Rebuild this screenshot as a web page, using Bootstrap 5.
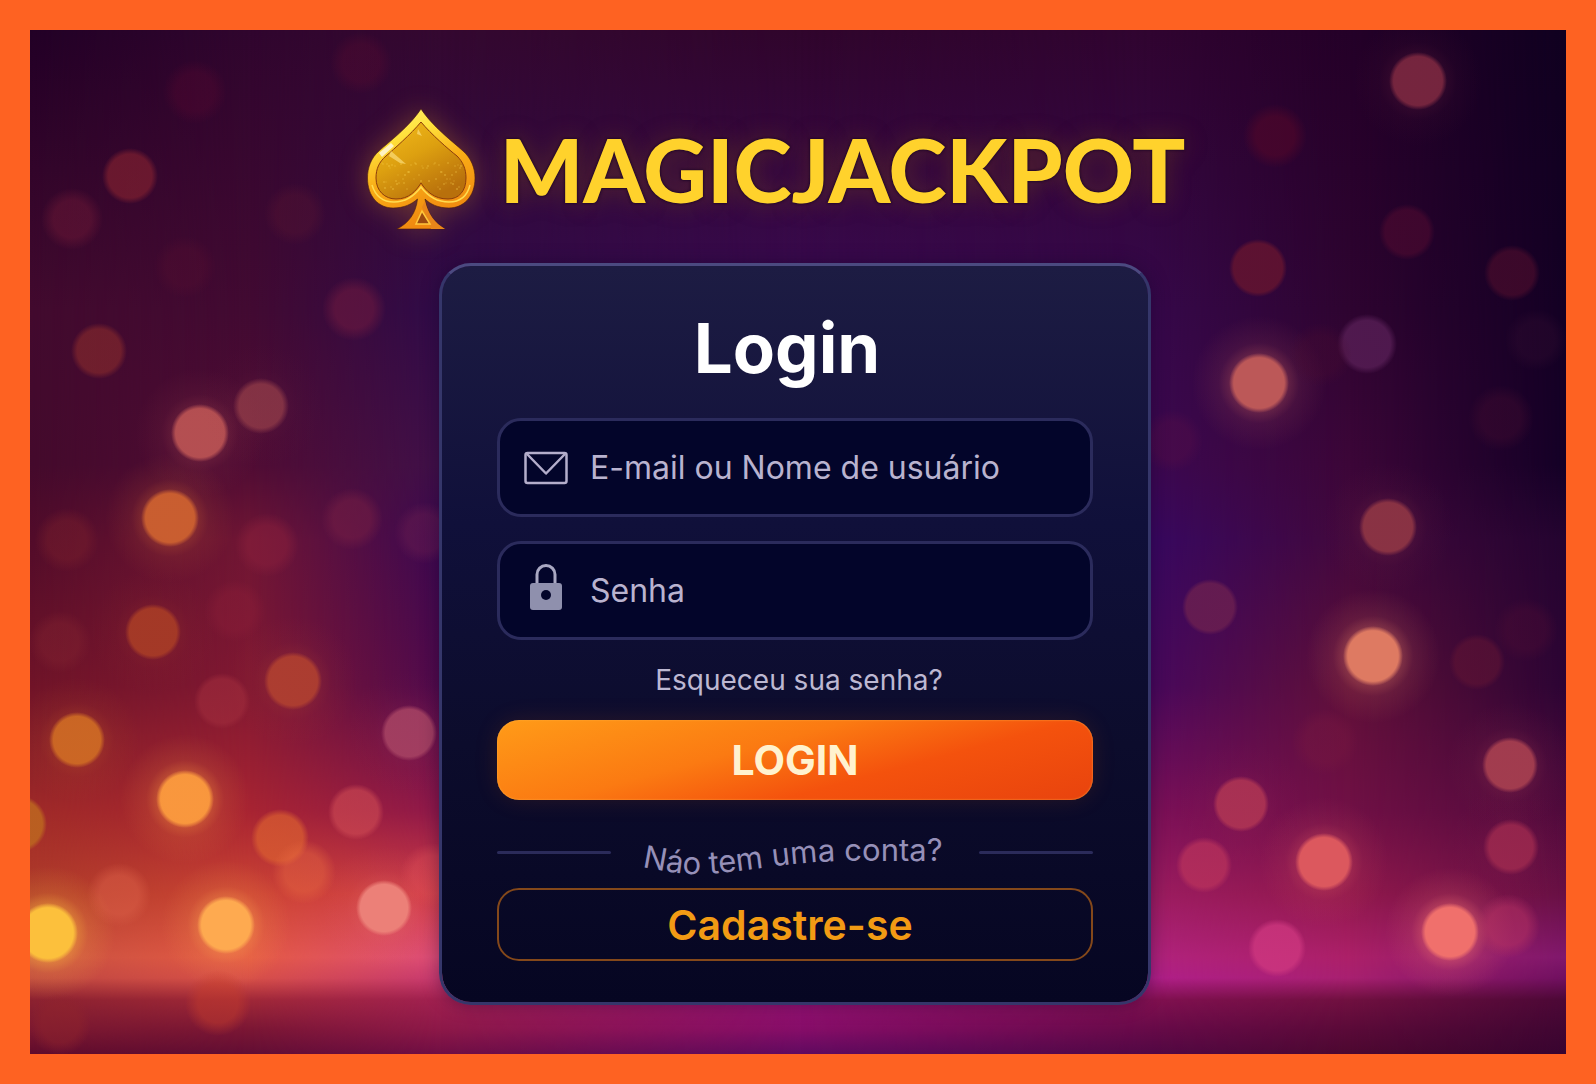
<!DOCTYPE html>
<html lang="pt-BR">
<head>
<meta charset="utf-8">
<meta name="viewport" content="width=device-width, initial-scale=1">
<title>MagicJackpot - Login</title>
<link href="https://cdn.jsdelivr.net/npm/bootstrap@5.3.0/dist/css/bootstrap.min.css" rel="stylesheet">
<style>
  body { background: #fe6222; font-family: Inter, "Liberation Sans", sans-serif; }
  .frame { min-height: 100vh; padding: 30px; }
  .stage { background: #340830; padding: 77px 6px 49px 0; }
  .backdrop { inset: 0; width: 100%; height: 100%; }
  .brand { gap: 19px; padding-right: 44px; margin-bottom: 32px; }
  .brand-icon { width: 120px; height: 124px; filter: drop-shadow(0 0 14px rgba(255,170,20,.3)); }
  .brand-name { font-family: Lato, sans-serif; font-weight: 900; font-size: 88px; line-height: 120px; color: #ffd22c;
    text-shadow: 0 0 2px #1c0626, 0 0 3px #1c0626, 0 0 24px rgba(150,100,10,.35); }
  .panel { max-width: 712px; padding: 40px 55px 41px; border: 3px solid #35366a; border-top-color: #4b4a80; border-radius: 32px;
    background: linear-gradient(#1d1c43, #10103a 35%, #0c0c2c 65%, #060622) padding-box; box-shadow: 0 0 18px rgba(20,0,40,.4); }
  .panel-title { font-size: 69px; line-height: 84px; font-weight: 700; color: #fff; padding-right: 16px; margin-bottom: 28px; }
  .field { height: 99px; padding: 0 24px; gap: 22px; border: 3px solid #2b2b5c; border-radius: 24px; background: #03052a; margin-bottom: 24px; }
  .field:focus-within { border-color: #6a6ab4; }
  .field svg { display: block; width: 44px; height: 50px; flex: none; overflow: visible; }
  .field .form-control, .field .form-control::placeholder { font-size: 32px; line-height: 44px; color: #b9b3cf; opacity: 1; }
  .field .form-control:focus { box-shadow: none; }
  .forgot { font-size: 28px; line-height: 32px; color: #bdb8d2; margin-bottom: 24px; }
  .btn-enter { height: 80px; border: 0; border-radius: 22px; font-size: 41px; line-height: 48px; font-weight: 700; color: #fff2cf;
    background: linear-gradient(165deg, #ff9b18, #fb7a12 40%, #f4520d 65%, #e8430e); box-shadow: inset 0 0 2px #ffb040, 0 0 24px rgba(255,110,0,.12); }
  .btn-enter:hover { color: #fff; }
  .separator { height: 88px; }
  .rule { width: 114px; height: 3px; border-radius: 2px; background: #2b2b5a; }
  .wave { width: 320px; height: 88px; font-size: 31px; fill: #9690b8; overflow: visible; }
  .btn-join { height: 73px; border: 2px solid #84481a; border-radius: 22px; font-size: 41px; line-height: 48px; font-weight: 600; color: #f29b14; padding: 0 10px 0 0; }
  .btn-join:hover { color: #ffb43c; border-color: #c06a20; }
</style>
<script src="https://cdn.jsdelivr.net/npm/bootstrap@5.3.0/dist/js/bootstrap.bundle.min.js"></script>
</head>
<body>
<div class="frame d-flex flex-column">
  <div class="stage position-relative flex-grow-1 overflow-hidden">
    <svg id="backdrop" class="backdrop position-absolute" viewBox="30 30 1536 1024" preserveAspectRatio="none" aria-hidden="true"></svg>

    <header class="brand position-relative d-flex justify-content-center align-items-center">
      <svg class="brand-icon" viewBox="360 106 120 124" aria-hidden="true">
        <defs>
          <linearGradient id="rim" x1="0" y1="0" x2=".35" y2="1">
            <stop offset="0" stop-color="#fff27a"/><stop offset=".3" stop-color="#ffe23c"/><stop offset=".6" stop-color="#f9ad16"/><stop offset="1" stop-color="#f08a10"/>
          </linearGradient>
          <linearGradient id="core" x1="0" y1="0" x2=".6" y2="1">
            <stop offset="0" stop-color="#f4bd1c"/><stop offset=".5" stop-color="#dda010"/><stop offset="1" stop-color="#b8700c"/>
          </linearGradient>
        </defs>
        <path fill="url(#rim)" stroke="#4a1c10" stroke-width=".6" d="M420 108C431 125 452 141 462 150C470 157 474 167 474 177C474 196 462 207 448 207C437 207 429 203 424 198C426 212 433 222 444 228H396C408 222 415 212 416.500 198C411 203 403 207 392 207C378 207 366.500 196 366.500 177C366.500 167 370 157 378 150C388 141 409 125 420 108Z"/>
        <path fill="none" stroke="#ffdc50" stroke-width="1.500" d="M371 184C375 197 383 201 393 201C406 201 414 194 420 186C426 194 434 201 448 201C458 201 466 196 469 184"/>
        <path fill="url(#core)" stroke="#8c3c0c" stroke-width="1" d="M420 121C410 133 393 148 385 155C378 161 375 168 375 177C375 190 384 198 395 198C408 198 415 190 420 182C425 190 433 198 447 198C458 198 465 190 465 177C465 168 462 161 456 155C447 148 430 133 420 121Z"/>
        <path fill="#fff" opacity=".7" d="M378 152L390 142L393 145L381 156Z"/>
        <path fill="#ffe68c" opacity=".6" d="M390 150L405 163L399 162L388 155ZM417 128L421 135L416 133Z"/>
        <path fill="#e8861a" d="M424 200C427 213 434 222 444 228H430L421 206Z"/>
        <path fill="#9c4a10" stroke="#ffc83c" stroke-width="1.500" d="M421 210L415 223H429Z"/>
        <g id="glitter" fill="#ffdc5a"></g>
      </svg>
      <div class="brand-name">MAGICJACKPOT</div>
    </header>

    <main class="panel position-relative mx-auto">
      <form onsubmit="return false">
        <h1 class="panel-title text-center">Login</h1>

        <div class="field d-flex align-items-center">
          <label for="user">
            <svg viewBox="0 0 44 50" fill="none" stroke="#b4aecb" stroke-width="2.500" stroke-linejoin="round" role="img" aria-label="E-mail ou Nome de usuário">
              <rect x="1.500" y="10" width="41" height="30" rx="2"/><path d="M3 11L22 30.500L41 11"/>
            </svg>
          </label>
          <input class="form-control bg-transparent border-0 p-0" id="user" type="text" placeholder="E-mail ou Nome de usuário">
        </div>

        <div class="field d-flex align-items-center">
          <label for="pass">
            <svg viewBox="0 4 44 50" role="img" aria-label="Senha">
              <path d="M13 21V12.500a9 9 0 0 1 18 0V21" fill="none" stroke="#a9a8c2" stroke-width="3"/>
              <rect x="6" y="21" width="32" height="27" rx="3" fill="#8f90ad"/><circle cx="22" cy="33" r="5" fill="#03052a"/>
            </svg>
          </label>
          <input class="form-control bg-transparent border-0 p-0" id="pass" type="password" placeholder="Senha">
        </div>

        <div class="d-flex justify-content-center ps-2"><a class="forgot text-decoration-none" href="#">Esqueceu sua senha?</a></div>
        <button class="btn btn-enter d-block w-100" type="submit">LOGIN</button>

        <div class="separator d-flex align-items-center justify-content-between">
          <span class="rule mt-3"></span>
          <svg class="wave" viewBox="635 800 320 88" role="img" aria-label="Náo tem uma conta?">
            <path id="wavePath" fill="none" d="M642 867C664 871 682 875 704 874C748 872 790 861 850 861H990"/>
            <text><textPath href="#wavePath">Náo tem uma conta?</textPath></text>
          </svg>
          <span class="rule mt-3"></span>
        </div>

        <button class="btn btn-join d-block w-100" type="button">Cadastre-se</button>
      </form>
    </main>
  </div>
</div>

<script>
  // Colour mesh: one vertical gradient per column, cross-faded between neighbours
  const rows = [30, 310, 465, 540, 686, 812, 894, 957, 978, 1000, 1030, 1054];
  const mesh = [
    [30,   '220026 420a2e 440a2c 520c2a 701428 a02a28 b03c2a c85040 c04840 8c2230 7a1830 600c2c'],
    [250,  '30052e 420a32 500c34 701634 801832 a82432 cc4434 e45a44 d85048 a02838 7a1634 620e34'],
    [440,  '340830 300b48 401048 3c0850 500a4c 90194a d03c48 dc4c78 c83a70 a02050 8c1848 700e44'],
    [800,  '30052c 3a0a52 3a0a52 3a0a52 3a0a52 3a0a52 900e70 a01478 a01478 981274 850d68 600a60'],
    [1150, '300430 36084a 3c0850 380860 48085c 7c1058 9c1c60 b0227c b01f88 801050 660a48 520844'],
    [1350, '240028 2e0430 3c0638 42083c 601038 701045 90184c ac2068 a82070 701040 5a0a38 4c0830'],
    [1566, '100020 140024 140026 240430 2c0434 500a3c 681044 80186c 701060 4c0836 400632 380430']
  ];
  // Light spots: x, y, radius, colour, opacity, halo opacity
  const spots = [
    [130,176,26,'8c2430',.6,0],[72,219,26,'7a1c38',.4,0],[99,351,26,'8c2c2c',.6,0],[354,309,27,'781c40',.5,0],[295,214,26,'6a1c30',.25,0],
    [195,92,27,'600830',.3,0],[361,63,26,'600c30',.3,0],[185,267,26,'601030',.25,0],[200,433,27,'bc5454',.9,.3],[261,406,26,'98404a',.7,.1],[170,518,27,'cc6030',.95,.45],
    [352,519,26,'7a2044',.5,0],[67,540,27,'80222c',.4,0],[425,533,26,'702050',.4,0],[267,545,27,'8c203c',.5,0],[153,632,26,'a83c26',.9,.2],
    [235,611,26,'8c1e38',.4,0],[293,681,27,'b04030',.9,.3],[222,701,26,'a02c3c',.6,0],[60,642,26,'842430',.4,0],[77,740,26,'d06c24',.9,.25],
    [409,733,26,'a84464',.85,.1],[185,799,27,'fb9a3e',.95,.5],[356,812,26,'d04c54',.6,0],[280,838,27,'dc6030',.7,0],[304,872,27,'e86840',.45,0],
    [18,824,27,'bc6420',.9,0],[119,895,27,'dc6048',.5,0],[48,933,28,'fcc03c',1,.6],[226,925,27,'feaa50',1,.5],[384,908,26,'ec8078',1,.2],
    [218,1003,28,'c43c2c',.5,0],[60,1024,26,'90242c',.5,0],[432,875,27,'e05058',.4,0],
    [1418,81,27,'7c2840',.9,.25],[1275,136,27,'5c0828',.5,0],[1407,232,26,'500a30',.6,0],[1258,268,27,'641430',.85,0],[1512,273,26,'4a0c2c',.7,0],
    [1367,344,28,'5a2058',.75,0],[1259,383,28,'bc5858',1,.5],[1536,340,26,'300c30',.4,0],[1501,418,28,'440c30',.4,0],[1172,441,26,'500c48',.5,0],
    [1388,527,27,'8c3444',.95,.25],[1210,607,26,'6c2050',.8,0],[1373,656,28,'de7a62',1,.5],[1477,662,26,'601434',.6,0],[1526,630,27,'4c0c34',.4,0],
    [1510,765,26,'a84050',.9,.25],[1241,804,26,'b43854',.8,.1],[1324,862,27,'dc585e',1,.4],[1204,865,26,'bc345c',.7,0],[1511,847,26,'a42c50',.75,.1],
    [1277,948,27,'d03880',.75,0],[1450,932,27,'f0706c',1,.6],[1508,926,27,'bc3464',.5,0],[1325,742,28,'781840',.4,0],[1320,355,27,'480c30',.35,0]
  ];
  let defs = '<linearGradient id="fade"><stop offset="0" stop-color="#000"/><stop offset="1" stop-color="#fff"/></linearGradient>' +
    '<mask id="cross" maskContentUnits="objectBoundingBox" x="0" y="0" width="1" height="1"><rect width="1" height="1" fill="url(#fade)"/></mask>';
  let art = '';
  mesh.forEach(([x, colours], i) => {
    defs += `<linearGradient id="col${i}" gradientUnits="userSpaceOnUse" x1="0" y1="30" x2="0" y2="1054">` +
      colours.split(' ').map((c, k) => `<stop offset="${(rows[k] - 30) / 1024}" stop-color="#${c}"/>`).join('') + '</linearGradient>';
    if (!i) return;
    const left = mesh[i - 1][0], w = x - left;
    art += `<rect x="${left}" y="30" width="${w}" height="1024" fill="url(#col${i - 1})"/>` +
      `<rect x="${left}" y="30" width="${w}" height="1024" fill="url(#col${i})" mask="url(#cross)"/>`;
  });
  spots.forEach(([x, y, r, c, o, halo], i) => {
    // Faint spots lie further out of focus, so their edge is softer
    const edge = o > .75 ? .84 : o > .5 ? .78 : .6;
    defs += `<radialGradient id="s${i}"><stop offset="${edge}" stop-color="#${c}"/><stop offset="1" stop-color="#${c}" stop-opacity="0"/></radialGradient>`;
    if (halo) {
      defs += `<radialGradient id="h${i}"><stop offset=".3" stop-color="#${c}" stop-opacity="${halo}"/><stop offset=".6" stop-color="#${c}" stop-opacity="${halo / 4}"/><stop offset="1" stop-color="#${c}" stop-opacity="0"/></radialGradient>`;
      art += `<circle cx="${x}" cy="${y}" r="${r * 2.4}" fill="url(#h${i})"/>`;
    }
    art += `<circle cx="${x}" cy="${y}" r="${r + (edge < .7 ? 5 : 2)}" fill="url(#s${i})" opacity="${o}"/>`;
  });
  document.getElementById('backdrop').innerHTML = `<defs>${defs}</defs>${art}`;

  let specks = '';
  for (let i = 0; i < 70; i++) {
    const x = 381 + (i * 37) % 80, y = 162 + (i * i * 7 + i * 5) % 29;
    if (y > 180 && Math.abs(x - 420) < 14) continue;
    specks += `<circle cx="${x}" cy="${y}" r=".7" opacity="${.3 + (i % 4) * .15}"/>`;
  }
  document.getElementById('glitter').innerHTML = specks;
</script>
</body>
</html>
